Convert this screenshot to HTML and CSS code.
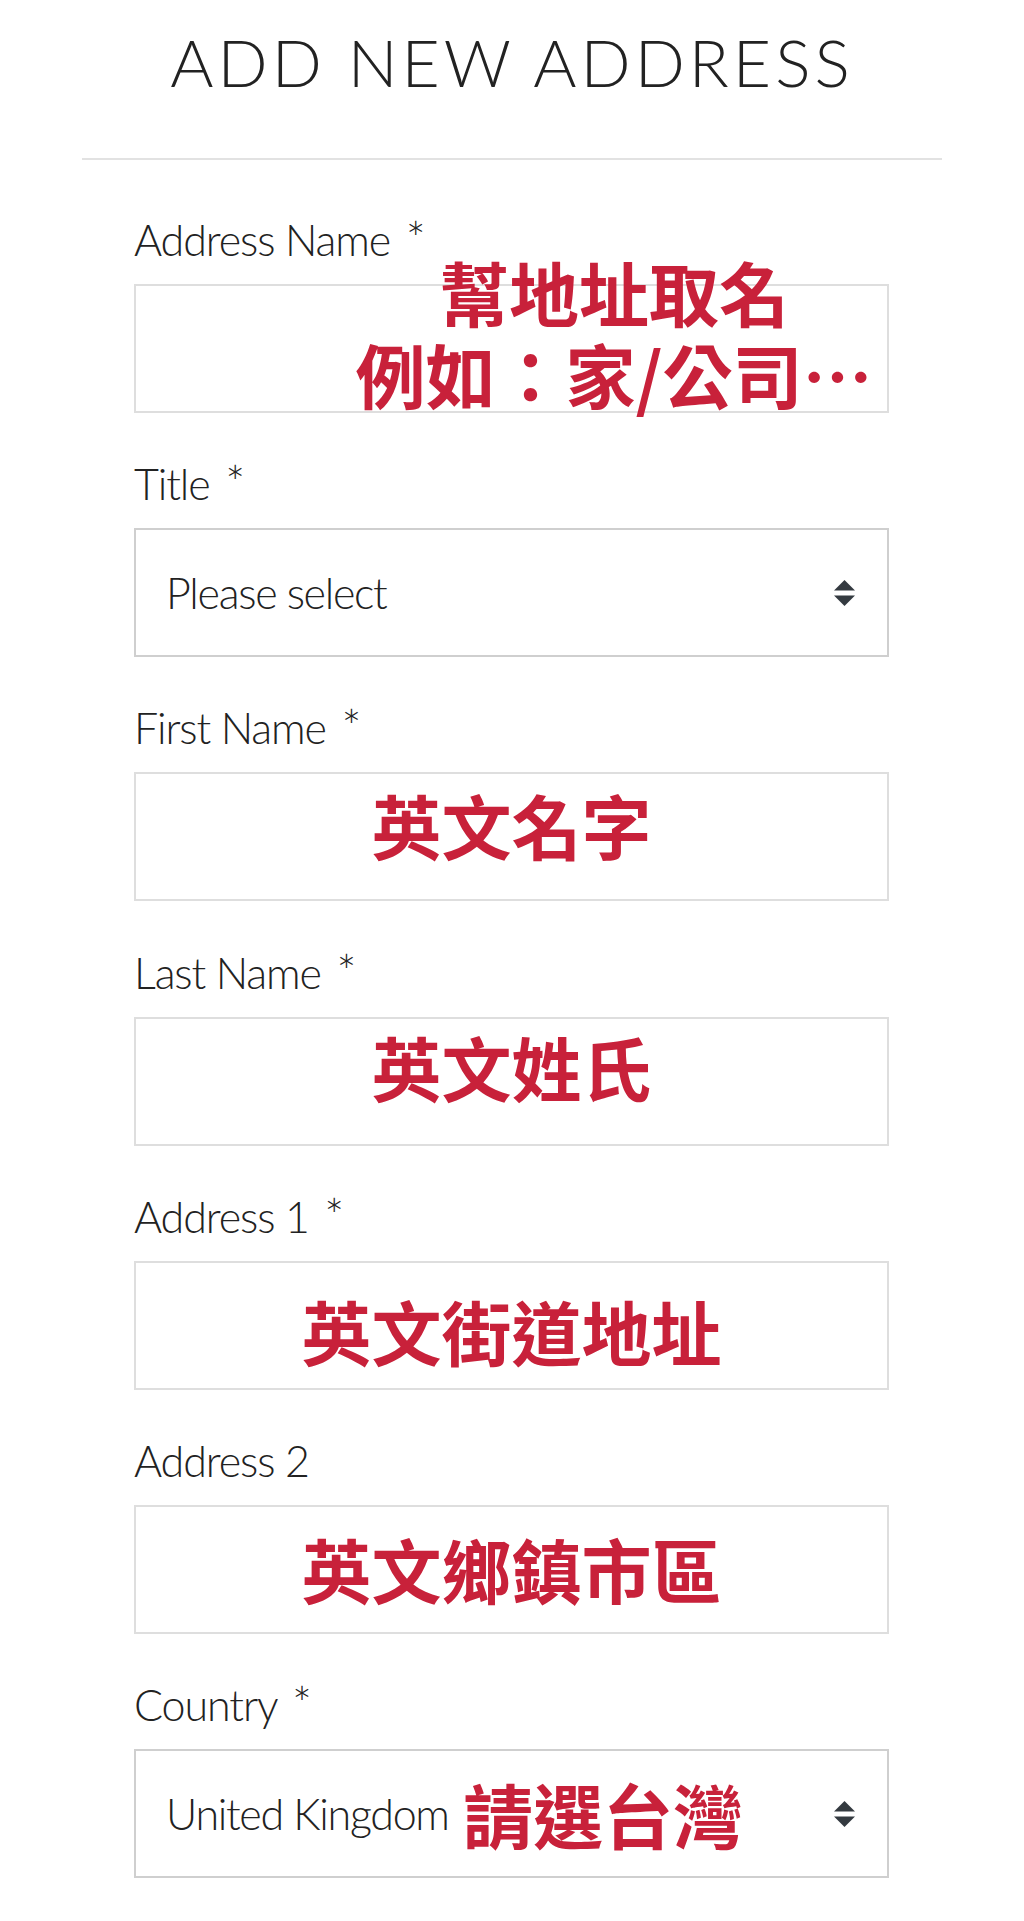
FILE: index.html
```html
<!DOCTYPE html>
<html lang="en">
<head>
<meta charset="utf-8">
<title>Add New Address</title>
<link rel="stylesheet" href="styles.css">
</head>
<body>
<main class="page">
  <h1 class="title">ADD NEW ADDRESS</h1>
  <hr class="rule">
  <form class="form">
    <div class="field">
      <label class="label">Address Name <span class="req">*</span></label>
      <div class="box">
        <span class="note note-name">幫地址取名<br>例如：家/公司…</span>
      </div>
    </div>
    <div class="field">
      <label class="label">Title <span class="req">*</span></label>
      <div class="box select">
        <span class="value">Please select</span>
        <svg class="arrows" viewBox="0 0 21 26" aria-hidden="true"><path d="M10.5 0 L21 10.5 L0 10.5 Z"/><path d="M0 15.5 L21 15.5 L10.5 26 Z"/></svg>
      </div>
    </div>
    <div class="field">
      <label class="label">First Name <span class="req">*</span></label>
      <div class="box"><span class="note shift-up">英文名字</span></div>
    </div>
    <div class="field">
      <label class="label">Last Name <span class="req">*</span></label>
      <div class="box"><span class="note shift-up-more">英文姓氏</span></div>
    </div>
    <div class="field">
      <label class="label">Address 1 <span class="req">*</span></label>
      <div class="box"><span class="note shift-down">英文街道地址</span></div>
    </div>
    <div class="field">
      <label class="label">Address 2</label>
      <div class="box"><span class="note">英文鄉鎮市區</span></div>
    </div>
    <div class="field">
      <label class="label">Country <span class="req">*</span></label>
      <div class="box select">
        <span class="value">United Kingdom</span>
        <span class="note note-country">請選台灣</span>
        <svg class="arrows" viewBox="0 0 21 26" aria-hidden="true"><path d="M10.5 0 L21 10.5 L0 10.5 Z"/><path d="M0 15.5 L21 15.5 L10.5 26 Z"/></svg>
      </div>
    </div>
  </form>
</main>
</body>
</html>
```

FILE: styles.css
```css
html, body {
  margin: 0;
  padding: 0;
  background: #ffffff;
}

.page {
  font-family: Lato, "Noto Sans", "Noto Sans CJK TC", sans-serif;
  color: #222222;
}

.title {
  margin: 22px 0 0;
  font-size: 66px;
  font-weight: 300;
  line-height: 79px;
  letter-spacing: 4px;
  text-align: center;
}

.rule {
  margin: 57px 82px 0;
  height: 2px;
  border: 0;
  background: #e2e2e2;
}

.form {
  margin: 0;
  padding: 54px 135px 0 134px;
}

.field {
  margin-bottom: 45.2px;
}

.field:last-child {
  margin-bottom: 0;
}

.label {
  display: block;
  height: 52px;
  font-size: 43px;
  font-weight: 300;
  line-height: 52px;
  letter-spacing: -1.1px;
  margin-bottom: 18px;
}

.req {
  margin-left: 5px;
  font-size: 47px;
  line-height: 0;
  letter-spacing: 0;
}

.box {
  position: relative;
  box-sizing: border-box;
  height: 129px;
  border: 2px solid #dedede;
  display: flex;
  align-items: center;
  justify-content: center;
}

.select {
  border-color: #cfcfcf;
  justify-content: space-between;
  padding: 0 32px 0 30px;
}

.value {
  font-size: 43px;
  font-weight: 300;
  line-height: 52px;
  letter-spacing: -1.3px;
}

.arrows {
  width: 21px;
  height: 26px;
  fill: #343a40;
  flex: none;
}

.note {
  font-family: "Noto Sans CJK TC", "Noto Sans CJK SC", sans-serif;
  font-weight: 700;
  font-size: 70px;
  line-height: 1;
  color: #c8213a;
  white-space: nowrap;
}

.shift-up {
  margin-top: -24px;
}

.shift-up-more {
  margin-top: -28px;
}

.shift-down {
  margin-top: 12px;
}

.note-name {
  position: absolute;
  top: -35px;
  left: 478px;
  transform: translateX(-50%);
  line-height: 82px;
  text-align: center;
}

.note-country {
  position: absolute;
  left: 327px;
  top: 50%;
  transform: translateY(-50%);
}
```
